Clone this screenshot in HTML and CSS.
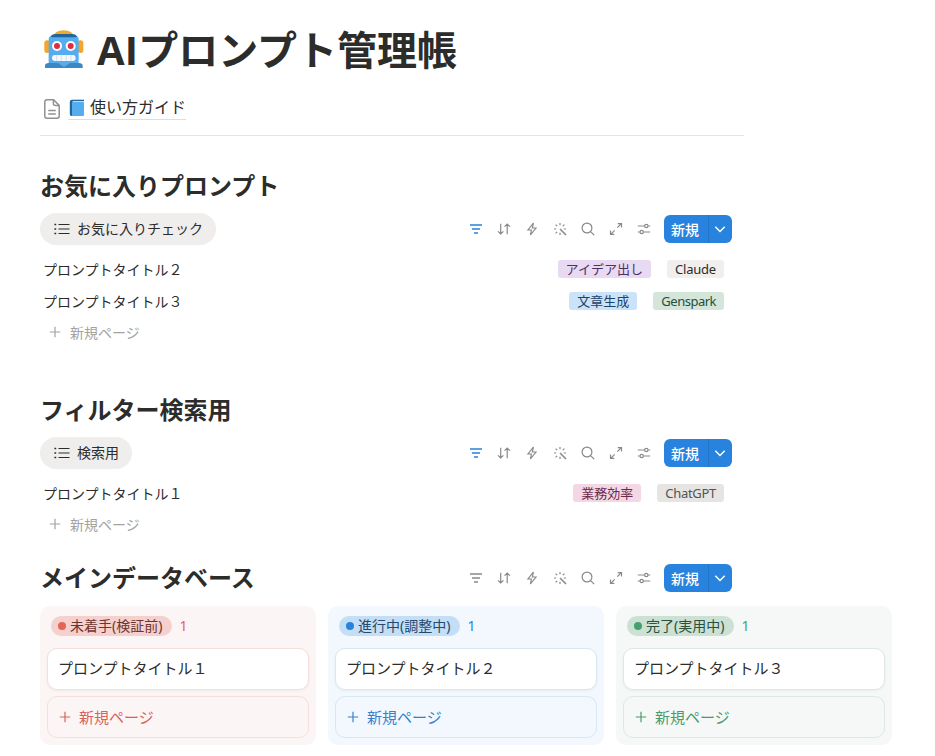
FILE: index.html
```html
<!DOCTYPE html>
<html lang="ja">
<head>
    <meta charset="UTF-8">
    <meta name="viewport" content="width=device-width, initial-scale=1.0">
    <title>AIプロンプト管理帳</title>
    <link rel="stylesheet" href="styles.css">
</head>
<body>
    <!-- Shared icons -->
    <svg class="sprite" width="0" height="0">
        <symbol id="i-list" viewBox="0 0 16 16">
            <path d="M4.5 3.5h11M4.5 8h11M4.5 12.5h11"/>
            <path d="M.4 3.5h1.8M.4 8h1.8M.4 12.5h1.8" stroke-width="1.7"/>
        </symbol>
        <symbol id="i-filter" viewBox="0 0 16 16">
            <path d="M2 4h12M4 8h8M6 12h4" stroke-width="1.5"/>
        </symbol>
        <symbol id="i-sort" viewBox="0 0 16 16">
            <path d="M4.7 2.8v10M2 10.3l2.7 2.7 2.7-2.7M11.2 13.2v-10M8.5 5.7L11.2 3l2.7 2.7"/>
        </symbol>
        <symbol id="i-bolt" viewBox="0 0 16 16">
            <path d="M9.4 2L4 9h3.4l-1 5L12 7H8.4z"/>
        </symbol>
        <symbol id="i-wand" viewBox="0 0 16 16">
            <path d="M8 8l6 6" stroke-width="1.6"/>
            <path d="M8 2v2.2M3.6 3.6l1.6 1.6M2 8h2.2M3.6 12.4l1.6-1.6M12.4 3.6l-1.6 1.6M11.8 8H14M8 11.8V14"/>
        </symbol>
        <symbol id="i-search" viewBox="0 0 16 16">
            <circle cx="7" cy="7" r="4.9"/>
            <path d="M10.6 10.6l3.6 3.6"/>
        </symbol>
        <symbol id="i-expand" viewBox="0 0 16 16">
            <path d="M9.3 6.7l4-4M9.7 2.6h3.8v3.8M6.7 9.3l-4 4M2.5 9.6v3.8h3.8"/>
        </symbol>
        <symbol id="i-sliders" viewBox="0 0 16 16">
            <path d="M1.8 5h6.6M12.2 5h2M1.8 11h2M7.6 11h6.6"/>
            <circle cx="10.3" cy="5" r="1.7"/>
            <circle cx="5.7" cy="11" r="1.7"/>
        </symbol>
        <symbol id="i-down" viewBox="0 0 12 12">
            <path d="M1.3 3.8L6 8.5l4.7-4.7" stroke-width="1.5"/>
        </symbol>
        <symbol id="i-plus" viewBox="0 0 12 12">
            <path d="M6 .8v10.4M.8 6h10.4"/>
        </symbol>
    </svg>

    <div class="page">
        <h1 class="title">
            <svg class="robot" viewBox="0 0 120 120">
                <path d="M25 26q8-22 34-22t34 22z" fill="#f4a62a"/>
                <rect x="1" y="34" width="17" height="38" rx="8" fill="#f4a62a"/>
                <rect x="101" y="34" width="17" height="38" rx="8" fill="#f4a62a"/>
                <path d="M14 106V32q0-12 10-12h70q10 0 10 12v74z" fill="#55acee"/>
                <path d="M21 22q3-7 14-7h48q12 0 15 7 1 3-4 3H25q-5 0-4-3z" fill="#226699"/>
                <path d="M3 117v-7q0-8 12-8h89q12 0 12 8v7z" fill="#3b88c3"/>
                <path d="M42 102h36L60 114z" fill="#55acee"/>
                <circle cx="39" cy="51" r="15" fill="#fff"/>
                <circle cx="80" cy="51" r="15" fill="#fff"/>
                <circle cx="39" cy="51" r="9" fill="#dd2e44"/>
                <circle cx="80" cy="51" r="9" fill="#dd2e44"/>
                <rect x="24" y="78" width="71" height="18" rx="9" fill="#f5f8fa"/>
                <path d="M38 78v18M52 78v18M67 78v18M81 78v18" stroke="#c3d6e3" stroke-width="2"/>
            </svg>
            <span><span class="latin">AI</span>プロンプト管理帳</span>
        </h1>

        <div class="guide">
            <svg class="doc" viewBox="0 0 16 20">
                <path d="M3 .8h6.6L15.2 6.4V17q0 2.2-2.2 2.2H3Q.8 19.2.8 17V3Q.8.8 3 .8z"/>
                <path d="M9.4 1v3.6q0 2 2 2H15M4.2 11.5h7.6M4.2 15h7.6"/>
            </svg>
            <a class="guide-link">
                <svg class="book" viewBox="0 0 16 18">
                    <path d="M.8 3Q.8.8 3 .8h12v3H3z" fill="#e1e8ed"/>
                    <path d="M.8 3Q.8.8 3 .8h12v1.2H3.8v15H2.6Q.8 17 .8 15z" fill="#226699"/>
                    <path d="M3.8 2h10.7v1.4H3.8z" fill="#ccd6dd"/>
                    <rect x="3" y="3" width="12" height="14" rx="1" fill="#55acee"/>
                </svg>
                <span>使い方ガイド</span>
            </a>
        </div>

        <section class="favorites">
            <h2>お気に入りプロンプト</h2>
            <div class="bar">
                <div class="tab"><svg><use href="#i-list"/></svg><span>お気に入りチェック</span></div>
                <div class="tools">
                    <svg class="active"><use href="#i-filter"/></svg>
                    <svg><use href="#i-sort"/></svg>
                    <svg><use href="#i-bolt"/></svg>
                    <svg><use href="#i-wand"/></svg>
                    <svg><use href="#i-search"/></svg>
                    <svg><use href="#i-expand"/></svg>
                    <svg><use href="#i-sliders"/></svg>
                    <div class="new"><span>新規</span><i><svg><use href="#i-down"/></svg></i></div>
                </div>
            </div>
            <div class="row">
                <span>プロンプトタイトル２</span>
                <div class="tags"><span class="tag purple">アイデア出し</span><span class="tag light">Claude</span></div>
            </div>
            <div class="row">
                <span>プロンプトタイトル３</span>
                <div class="tags"><span class="tag blue">文章生成</span><span class="tag green">Genspark</span></div>
            </div>
            <div class="add"><svg><use href="#i-plus"/></svg>新規ページ</div>
        </section>

        <section class="search">
            <h2>フィルター検索用</h2>
            <div class="bar">
                <div class="tab"><svg><use href="#i-list"/></svg><span>検索用</span></div>
                <div class="tools">
                    <svg class="active"><use href="#i-filter"/></svg>
                    <svg><use href="#i-sort"/></svg>
                    <svg><use href="#i-bolt"/></svg>
                    <svg><use href="#i-wand"/></svg>
                    <svg><use href="#i-search"/></svg>
                    <svg><use href="#i-expand"/></svg>
                    <svg><use href="#i-sliders"/></svg>
                    <div class="new"><span>新規</span><i><svg><use href="#i-down"/></svg></i></div>
                </div>
            </div>
            <div class="row">
                <span>プロンプトタイトル１</span>
                <div class="tags"><span class="tag pink">業務効率</span><span class="tag gray">ChatGPT</span></div>
            </div>
            <div class="add"><svg><use href="#i-plus"/></svg>新規ページ</div>
        </section>

        <section class="main-db">
            <div class="bar">
                <h2>メインデータベース</h2>
                <div class="tools">
                    <svg><use href="#i-filter"/></svg>
                    <svg><use href="#i-sort"/></svg>
                    <svg><use href="#i-bolt"/></svg>
                    <svg><use href="#i-wand"/></svg>
                    <svg><use href="#i-search"/></svg>
                    <svg><use href="#i-expand"/></svg>
                    <svg><use href="#i-sliders"/></svg>
                    <div class="new"><span>新規</span><i><svg><use href="#i-down"/></svg></i></div>
                </div>
            </div>
            <div class="board">
                <div class="column todo">
                    <div class="head"><span class="status">未着手(検証前)</span><span class="count">1</span></div>
                    <div class="card">プロンプトタイトル１</div>
                    <div class="card card-new"><svg><use href="#i-plus"/></svg>新規ページ</div>
                </div>
                <div class="column doing">
                    <div class="head"><span class="status">進行中(調整中)</span><span class="count">1</span></div>
                    <div class="card">プロンプトタイトル２</div>
                    <div class="card card-new"><svg><use href="#i-plus"/></svg>新規ページ</div>
                </div>
                <div class="column done">
                    <div class="head"><span class="status">完了(実用中)</span><span class="count">1</span></div>
                    <div class="card">プロンプトタイトル３</div>
                    <div class="card card-new"><svg><use href="#i-plus"/></svg>新規ページ</div>
                </div>
            </div>
        </section>
    </div>
</body>
</html>
```

FILE: styles.css
```css
* {
    box-sizing: border-box;
}
body {
    margin: 0;
    background: #fff;
    color: #2c2c2b;
    font-family: "Noto Sans", "Noto Sans CJK JP", sans-serif;
    font-size: 14px;
    overflow: hidden;
}
svg {
    display: block;
    flex: none;
    fill: none;
    stroke: currentColor;
    stroke-width: 1.2;
}
.sprite {
    position: absolute;
}
.page {
    width: 704px;
    margin-left: 40px;
    padding-top: 24px;
    white-space: nowrap;
}
.title {
    display: flex;
    align-items: center;
    height: 52px;
    margin: 0;
    font-size: 40px;
    line-height: 50px;
}
.latin {
    font-family: "Open Sans", sans-serif;
    letter-spacing: 0.2px;
}
.robot {
    width: 40px;
    height: 40px;
    margin: -3px 13px 0 4px;
    stroke: none;
}
.guide {
    display: flex;
    align-items: center;
    height: 24px;
    margin-top: 20px;
    font-size: 16px;
    line-height: 23px;
}
.doc {
    width: 16px;
    height: 20px;
    margin: 2px 8px 0 4px;
    color: #91918e;
    stroke-width: 1.5;
}
.guide-link {
    display: flex;
    align-items: center;
    gap: 5px;
    padding-left: 1px;
    border-bottom: 1px solid #dededc;
}
.book {
    width: 16px;
    height: 18px;
    stroke: none;
}
.favorites {
    margin-top: 15px;
    padding-top: 34px;
    border-top: 1px solid #e4e4e2;
}
h2 {
    height: 32px;
    margin: 0;
    font-size: 24px;
    line-height: 31px;
}
.bar {
    display: flex;
    align-items: center;
    justify-content: space-between;
    height: 32px;
    padding-right: 12px;
}
.favorites .bar,
.search .bar {
    margin: 11px 0 8px;
}
.tab {
    display: flex;
    align-items: center;
    gap: 7px;
    height: 32px;
    padding: 0 13px 0 14px;
    border-radius: 16px;
    background: #efeeed;
}
.tab span {
    padding-bottom: 2px;
}
.tab svg {
    width: 16px;
    height: 16px;
}
.tools {
    display: flex;
    align-items: center;
    gap: 12px;
    color: #8a8986;
}
.tools > svg {
    width: 16px;
    height: 16px;
}
.tools .active {
    color: #2783de;
}
.new {
    display: flex;
    align-items: center;
    width: 68px;
    height: 28px;
    border-radius: 6px;
    background: #2783de;
    color: #fff;
    font-weight: 500;
}
.new span {
    width: 44px;
    padding-left: 7px;
}
.new i {
    display: flex;
    align-items: center;
    justify-content: center;
    width: 23px;
    height: 28px;
    border-left: 1px solid #2274c6;
}
.new svg {
    width: 12px;
    height: 12px;
}
.row {
    display: flex;
    align-items: center;
    justify-content: space-between;
    height: 32px;
    padding: 0 20px 0 3px;
}
.tags {
    display: flex;
    gap: 16px;
}
.tag {
    height: 18px;
    padding: 0 8px;
    border-radius: 3px;
    font-size: 13px;
    line-height: 18px;
}
.purple {
    background: #e8daf2;
    color: #4b2f63;
}
.light {
    background: #f0efed;
    letter-spacing: -0.2px;
}
.blue {
    background: #cae3f8;
    color: #1d4268;
}
.green {
    background: #d4e5da;
    color: #264f3a;
    letter-spacing: -0.5px;
}
.pink {
    background: #f4d7e4;
    color: #692b49;
}
.gray {
    background: #e6e5e3;
    color: #55534e;
    letter-spacing: -0.3px;
}
.add {
    display: flex;
    align-items: center;
    gap: 9px;
    height: 30px;
    padding-left: 9px;
    color: #a4a39f;
}
.add svg {
    width: 12px;
    height: 12px;
}
.search {
    margin-top: 47px;
}
.main-db {
    margin-top: 23px;
}
.board {
    display: flex;
    gap: 12px;
    width: 852px;
    margin-top: 12px;
}
.column {
    width: 276px;
    height: 139px;
    padding: 10px 7px 6px;
    border-radius: 10px;
}
.head {
    display: flex;
    align-items: center;
    gap: 7px;
    height: 20px;
    margin: 0 4px 12px;
    line-height: 18px;
}
.status {
    display: flex;
    align-items: center;
    gap: 4px;
    height: 20px;
    padding: 0 10px 1px 7px;
    border-radius: 10px;
}
.status::before {
    content: "";
    width: 8px;
    height: 8px;
    margin-top: 1px;
    border-radius: 50%;
    background: var(--dot);
}
.count {
    padding-bottom: 1px;
    color: var(--dot);
}
.card {
    display: flex;
    align-items: center;
    height: 42px;
    padding: 0 10px 3px;
    border: 1px solid var(--line);
    border-radius: 10px;
    background: #fff;
    box-shadow: 0 1px 3px rgba(0, 0, 0, 0.05);
    font-size: 15px;
}
.card-new {
    gap: 8px;
    margin-top: 6px;
    padding: 0 11px 1px;
    background: none;
    box-shadow: none;
    color: var(--text);
}
.card-new svg {
    width: 12px;
    height: 12px;
}
.todo {
    --dot: #e56458;
    --line: #f6dedc;
    --text: #d9635a;
    background: #fcf5f5;
}
.todo .status {
    background: #f5d0cc;
    color: #6d3531;
}
.doing {
    --dot: #2783de;
    --line: #d7e8f0;
    --text: #3a80cb;
    background: #f2f8fd;
}
.doing .status {
    background: #c3def5;
    color: #26496f;
}
.done {
    --dot: #46a171;
    --line: #dee8e3;
    --text: #4b9a6e;
    background: #f5f8f7;
}
.done .status {
    background: #cce0d4;
    color: #2b513d;
}
```
